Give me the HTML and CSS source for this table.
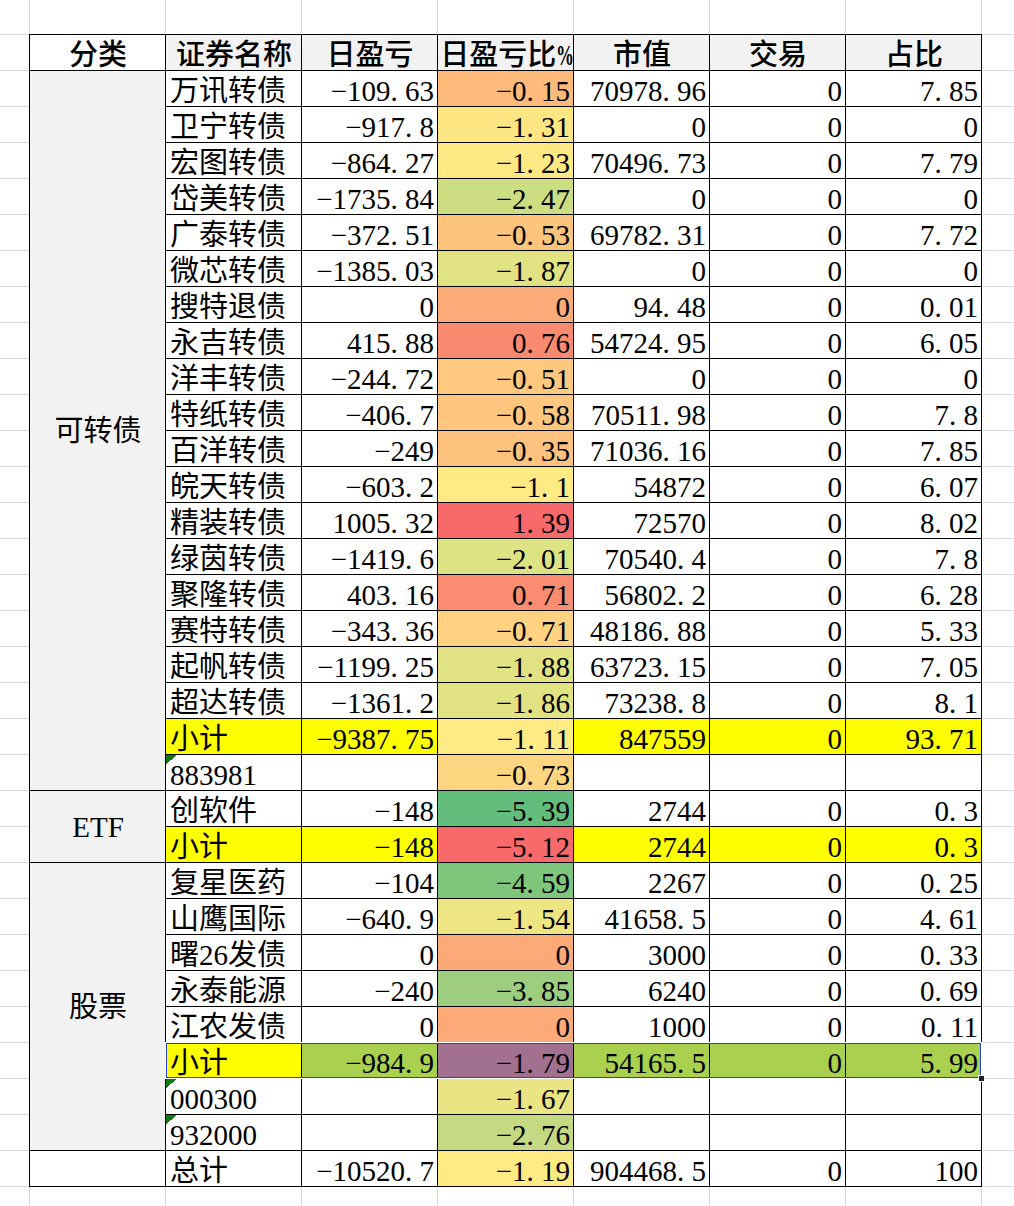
FILE: index.html
```html
<!DOCTYPE html>
<html lang="zh-CN">
<head>
<meta charset="utf-8">
<title>持仓日盈亏</title>
<link rel="stylesheet" href="styles.css">
</head>
<body>
<div class="sheet">
<div class="grid">
<table class="tbl">
<colgroup><col><col><col><col><col><col><col></colgroup>
<tr class="head">
<td class="h h0">分类</td><td class="h">证券名称</td><td class="h">日盈亏</td><td class="h hp">日盈亏比<span class="pc">%</span></td><td class="h">市值</td><td class="h">交易</td><td class="h">占比</td>
</tr>
<tr><td class="c" rowspan="20">可转债</td><td class="t">万讯转债</td><td class="n">−109<span class="p">.</span>63</td><td class="n" style="background:#fdba7b">−0<span class="p">.</span>15</td><td class="n">70978<span class="p">.</span>96</td><td class="n">0</td><td class="n">7<span class="p">.</span>85</td></tr>
<tr><td class="t">卫宁转债</td><td class="n">−917<span class="p">.</span>8</td><td class="n" style="background:#fee783">−1<span class="p">.</span>31</td><td class="n">0</td><td class="n">0</td><td class="n">0</td></tr>
<tr><td class="t">宏图转债</td><td class="n">−864<span class="p">.</span>27</td><td class="n" style="background:#fee883">−1<span class="p">.</span>23</td><td class="n">70496<span class="p">.</span>73</td><td class="n">0</td><td class="n">7<span class="p">.</span>79</td></tr>
<tr><td class="t">岱美转债</td><td class="n">−1735<span class="p">.</span>84</td><td class="n" style="background:#cddd82">−2<span class="p">.</span>47</td><td class="n">0</td><td class="n">0</td><td class="n">0</td></tr>
<tr><td class="t">广泰转债</td><td class="n">−372<span class="p">.</span>51</td><td class="n" style="background:#fdc47d">−0<span class="p">.</span>53</td><td class="n">69782<span class="p">.</span>31</td><td class="n">0</td><td class="n">7<span class="p">.</span>72</td></tr>
<tr><td class="t">微芯转债</td><td class="n">−1385<span class="p">.</span>03</td><td class="n" style="background:#e1e383">−1<span class="p">.</span>87</td><td class="n">0</td><td class="n">0</td><td class="n">0</td></tr>
<tr><td class="t">搜特退债</td><td class="n">0</td><td class="n" style="background:#fbab77">0</td><td class="n">94<span class="p">.</span>48</td><td class="n">0</td><td class="n">0<span class="p">.</span>01</td></tr>
<tr><td class="t">永吉转债</td><td class="n">415<span class="p">.</span>88</td><td class="n" style="background:#f98a70">0<span class="p">.</span>76</td><td class="n">54724<span class="p">.</span>95</td><td class="n">0</td><td class="n">6<span class="p">.</span>05</td></tr>
<tr><td class="t">洋丰转债</td><td class="n">−244<span class="p">.</span>72</td><td class="n" style="background:#fec97e">−0<span class="p">.</span>51</td><td class="n">0</td><td class="n">0</td><td class="n">0</td></tr>
<tr><td class="t">特纸转债</td><td class="n">−406<span class="p">.</span>7</td><td class="n" style="background:#fec67e">−0<span class="p">.</span>58</td><td class="n">70511<span class="p">.</span>98</td><td class="n">0</td><td class="n">7<span class="p">.</span>8</td></tr>
<tr><td class="t">百洋转债</td><td class="n">−249</td><td class="n" style="background:#fdc27d">−0<span class="p">.</span>35</td><td class="n">71036<span class="p">.</span>16</td><td class="n">0</td><td class="n">7<span class="p">.</span>85</td></tr>
<tr><td class="t">皖天转债</td><td class="n">−603<span class="p">.</span>2</td><td class="n" style="background:#ffea84">−1<span class="p">.</span>1</td><td class="n">54872</td><td class="n">0</td><td class="n">6<span class="p">.</span>07</td></tr>
<tr><td class="t">精装转债</td><td class="n">1005<span class="p">.</span>32</td><td class="n" style="background:#f8696b">1<span class="p">.</span>39</td><td class="n">72570</td><td class="n">0</td><td class="n">8<span class="p">.</span>02</td></tr>
<tr><td class="t">绿茵转债</td><td class="n">−1419<span class="p">.</span>6</td><td class="n" style="background:#dde283">−2<span class="p">.</span>01</td><td class="n">70540<span class="p">.</span>4</td><td class="n">0</td><td class="n">7<span class="p">.</span>8</td></tr>
<tr><td class="t">聚隆转债</td><td class="n">403<span class="p">.</span>16</td><td class="n" style="background:#f98c71">0<span class="p">.</span>71</td><td class="n">56802<span class="p">.</span>2</td><td class="n">0</td><td class="n">6<span class="p">.</span>28</td></tr>
<tr><td class="t">赛特转债</td><td class="n">−343<span class="p">.</span>36</td><td class="n" style="background:#fed280">−0<span class="p">.</span>71</td><td class="n">48186<span class="p">.</span>88</td><td class="n">0</td><td class="n">5<span class="p">.</span>33</td></tr>
<tr><td class="t">起帆转债</td><td class="n">−1199<span class="p">.</span>25</td><td class="n" style="background:#e0e283">−1<span class="p">.</span>88</td><td class="n">63723<span class="p">.</span>15</td><td class="n">0</td><td class="n">7<span class="p">.</span>05</td></tr>
<tr><td class="t">超达转债</td><td class="n">−1361<span class="p">.</span>2</td><td class="n" style="background:#e1e383">−1<span class="p">.</span>86</td><td class="n">73238<span class="p">.</span>8</td><td class="n">0</td><td class="n">8<span class="p">.</span>1</td></tr>
<tr class="sub"><td class="t">小计</td><td class="n">−9387<span class="p">.</span>75</td><td class="n" style="background:#ffeb84">−1<span class="p">.</span>11</td><td class="n">847559</td><td class="n">0</td><td class="n">93<span class="p">.</span>71</td></tr>
<tr><td class="t tri">883981</td><td class="n"></td><td class="n" style="background:#fed580">−0<span class="p">.</span>73</td><td class="n"></td><td class="n"></td><td class="n"></td></tr>
<tr><td class="c" rowspan="2">ETF</td><td class="t">创软件</td><td class="n">−148</td><td class="n" style="background:#63be7b">−5<span class="p">.</span>39</td><td class="n">2744</td><td class="n">0</td><td class="n">0<span class="p">.</span>3</td></tr>
<tr class="sub"><td class="t">小计</td><td class="n">−148</td><td class="n" style="background:#f8696b">−5<span class="p">.</span>12</td><td class="n">2744</td><td class="n">0</td><td class="n">0<span class="p">.</span>3</td></tr>
<tr><td class="c" rowspan="8">股票</td><td class="t">复星医药</td><td class="n">−104</td><td class="n" style="background:#7fc67d">−4<span class="p">.</span>59</td><td class="n">2267</td><td class="n">0</td><td class="n">0<span class="p">.</span>25</td></tr>
<tr><td class="t">山鹰国际</td><td class="n">−640<span class="p">.</span>9</td><td class="n" style="background:#eee583">−1<span class="p">.</span>54</td><td class="n">41658<span class="p">.</span>5</td><td class="n">0</td><td class="n">4<span class="p">.</span>61</td></tr>
<tr><td class="t">曙26发债</td><td class="n">0</td><td class="n" style="background:#fcaa78">0</td><td class="n">3000</td><td class="n">0</td><td class="n">0<span class="p">.</span>33</td></tr>
<tr><td class="t">永泰能源</td><td class="n">−240</td><td class="n" style="background:#9dce7f">−3<span class="p">.</span>85</td><td class="n">6240</td><td class="n">0</td><td class="n">0<span class="p">.</span>69</td></tr>
<tr><td class="t">江农发债</td><td class="n">0</td><td class="n" style="background:#fcaa78">0</td><td class="n">1000</td><td class="n">0</td><td class="n">0<span class="p">.</span>11</td></tr>
<tr class="sel-row"><td class="t yel">小计</td><td class="n">−984<span class="p">.</span>9</td><td class="n purple">−1<span class="p">.</span>79</td><td class="n">54165<span class="p">.</span>5</td><td class="n">0</td><td class="n">5<span class="p">.</span>99</td></tr>
<tr><td class="t tri">000300</td><td class="n"></td><td class="n" style="background:#e9e484">−1<span class="p">.</span>67</td><td class="n"></td><td class="n"></td><td class="n"></td></tr>
<tr><td class="t tri">932000</td><td class="n"></td><td class="n" style="background:#c4d981">−2<span class="p">.</span>76</td><td class="n"></td><td class="n"></td><td class="n"></td></tr>
<tr><td class="t blank"></td><td class="t">总计</td><td class="n">−10520<span class="p">.</span>7</td><td class="n" style="background:#ffeb84">−1<span class="p">.</span>19</td><td class="n">904468<span class="p">.</span>5</td><td class="n">0</td><td class="n">100</td></tr>
</table>
<div class="selection"></div>
</div>
</div>
</body>
</html>
```
FILE: styles.css
```css
html, body {
  margin: 0;
  padding: 0;
}
body {
  min-height: 1206px;
  background-color: #fff;
  background-image:
    linear-gradient(to right, #d9d9d9 1px, transparent 1px),
    linear-gradient(to bottom, #d9d9d9 1px, transparent 1px);
  background-size: 136px 100%, 100% 36px;
  background-position: 29px 0, 0 34px;
  font-family: "Liberation Serif", "Noto Sans CJK SC", serif;
  color: #000;
}
.sheet {
  padding: 34px 0 0 29px;
}
.grid {
  position: relative;
  width: 953px;
}
.tbl {
  border-collapse: separate;
  border-spacing: 1px;
  background: #000;
  table-layout: fixed;
  width: 953px;
}
.tbl col {
  width: 135px;
}
.tbl tr {
  height: 35px;
}
.tbl td {
  height: 35px;
  padding: 0 3px 0 4px;
  box-sizing: border-box;
  font-size: 29px;
  line-height: 30px;
  vertical-align: bottom;
  white-space: nowrap;
  overflow: hidden;
  background-color: #fff;
}
.tbl .n {
  text-align: right;
}
.tbl .t {
  text-align: left;
}
.tbl .c {
  background-color: #f2f2f2;
  text-align: center;
  vertical-align: middle;
  line-height: 36px;
}
.tbl .h {
  background-color: #f2f2f2;
  font-weight: 500;
  text-align: center;
}
.tbl .h0 {
  background-color: #fff;
}
.tbl .hp {
  padding: 0;
}
.pc {
  display: inline-block;
  width: 14.5px;
  font-weight: bold;
  transform: scaleX(0.62);
  transform-origin: left center;
}
.p {
  padding-right: 0.25em;
}
.sub td {
  background-color: #ffff00;
}
.sel-row td {
  background-color: #a9d04f;
}
.sel-row td.yel {
  background-color: #ffff00;
}
.sel-row td.purple {
  background-color: #a2718f;
}
.tbl td.tri {
  background-image: linear-gradient(to bottom right, #137a13 50%, transparent 50%);
  background-size: 11px 9px;
  background-repeat: no-repeat;
  background-position: 0 0;
}
.selection {
  position: absolute;
  left: 136px;
  top: 1008px;
  width: 817px;
  height: 37px;
  box-sizing: border-box;
  border: 1px solid #fff;
  box-shadow: inset 0 0 0 1px #2443d3;
  pointer-events: none;
}
.selection::after {
  content: "";
  position: absolute;
  right: -4px;
  bottom: -4px;
  width: 5px;
  height: 5px;
  background: #222;
  border: 1px solid #fff;
}
```
